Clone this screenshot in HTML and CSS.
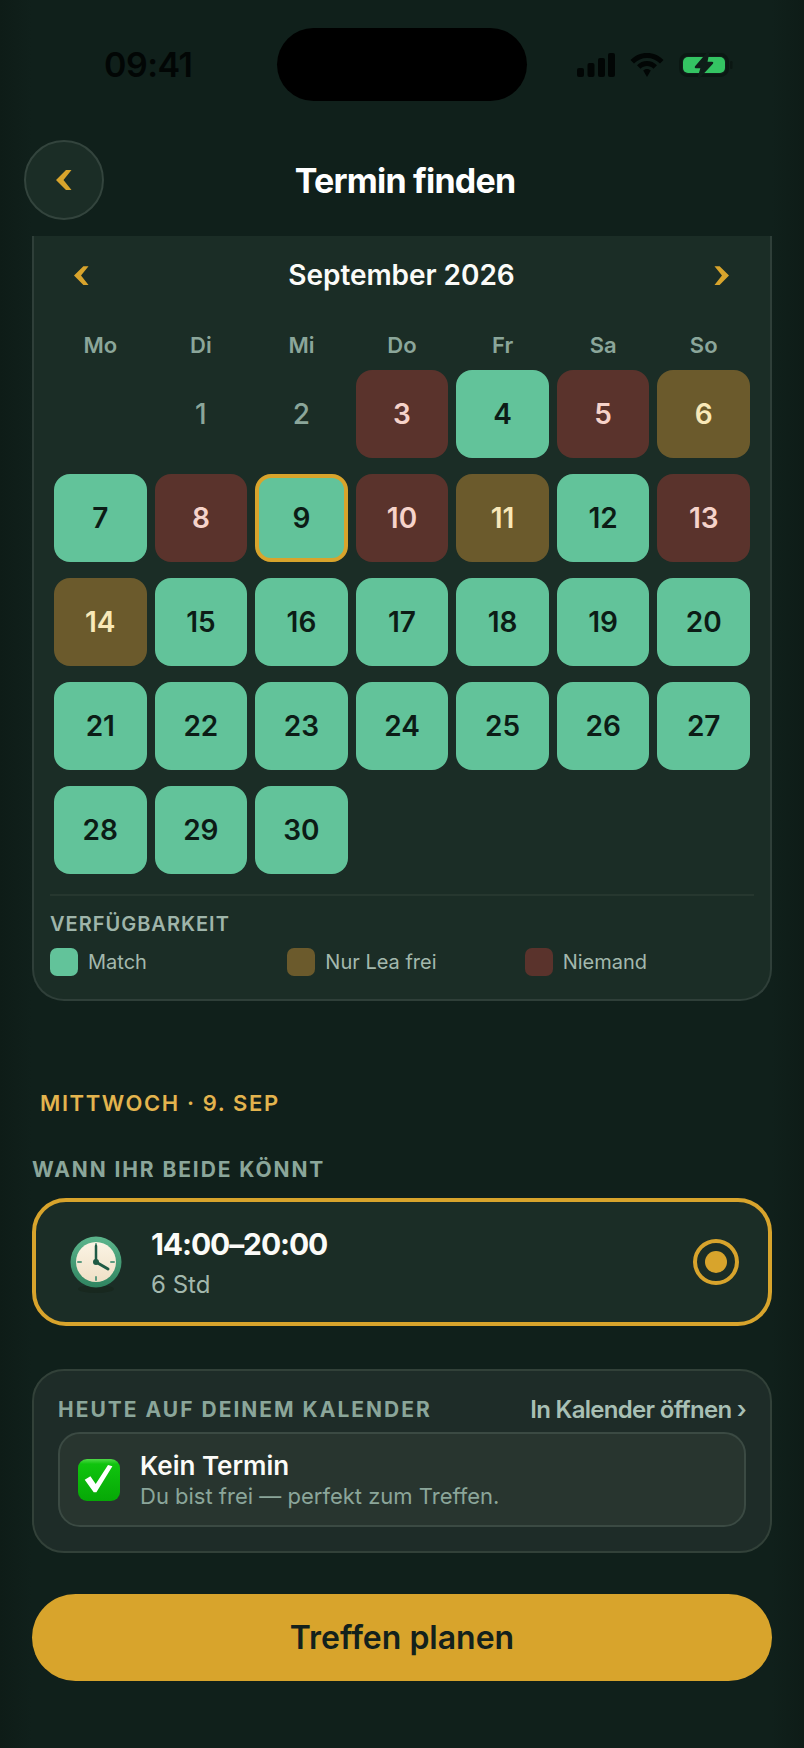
FILE: index.html
```html
<!DOCTYPE html>
<html lang="de">
<head>
    <meta charset="UTF-8">
    <meta name="viewport" content="width=device-width, initial-scale=1.0">
    <title>Termin finden</title>
    <link rel="stylesheet" href="styles.css">
</head>
<body>
    <div class="screen">
        <div class="status-bar">
            <span class="time">09:41</span>
            <div class="island"></div>
            <div class="status-icons">
                <svg width="38" height="24" viewBox="0 0 38 24">
                    <rect x="0" y="15" width="7" height="9" rx="2"/>
                    <rect x="10.500" y="10" width="7" height="14" rx="2"/>
                    <rect x="21" y="5" width="7" height="19" rx="2"/>
                    <rect x="31" y="0" width="7" height="24" rx="2"/>
                </svg>
                <svg width="34" height="24" viewBox="0 0 34 24">
                    <path d="M17 0C10.500 0 5 2.600 0.500 7L4 10.500C7.500 7 12 5 17 5C22 5 26.500 7 30 10.500L33.500 7C29 2.600 23.500 0 17 0Z"/>
                    <path d="M17 8C13 8 9.800 9.500 7 12.200L10.500 15.700C12.300 14 14.500 13 17 13C19.500 13 21.700 14 23.500 15.700L27 12.200C24.200 9.500 21 8 17 8Z"/>
                    <path d="M17 16C15.500 16 14.200 16.600 13.200 17.500L17 24L20.800 17.500C19.800 16.600 18.500 16 17 16Z"/>
                </svg>
                <svg class="battery" width="54" height="28" viewBox="0 0 54 28">
                    <rect x="1.500" y="3.500" width="47" height="21" rx="7" fill="none" stroke="#0b1713" stroke-width="3"/>
                    <rect x="4" y="6" width="42" height="16" rx="5" fill="#34c463"/>
                    <path d="M29 2L17 16H23L20 26L33 12H27Z" fill="#0f1e19" stroke="#0f1e19" stroke-width="2.500" stroke-linejoin="round"/>
                    <rect x="51" y="10" width="2.500" height="8" rx="1.200" fill="#0b1713"/>
                </svg>
            </div>
        </div>

        <header class="top-bar">
            <button class="back-btn">
                <svg width="16" height="20" viewBox="0 0 16 20"><polygon points="0,10 10,0 15.500,0 7.500,10 15.500,20 10,20"/></svg>
            </button>
            <h1 class="page-title">Termin finden</h1>
        </header>

        <section class="calendar-card">
            <div class="month-row">
                <svg class="month-arrow" width="15" height="19" viewBox="0 0 16 20"><polygon points="0,10 10,0 15.500,0 7.500,10 15.500,20 10,20"/></svg>
                <span class="month-name">September 2026</span>
                <svg class="month-arrow" width="15" height="19" viewBox="0 0 16 20"><polygon points="16,10 6,0 0.500,0 8.500,10 0.500,20 6,20"/></svg>
            </div>
            <div class="weekdays">
                <span>Mo</span><span>Di</span><span>Mi</span><span>Do</span><span>Fr</span><span>Sa</span><span>So</span>
            </div>
            <div class="days">
                <div class="day"></div>
                <div class="day past">1</div>
                <div class="day past">2</div>
                <div class="day none">3</div>
                <div class="day match">4</div>
                <div class="day none">5</div>
                <div class="day lea">6</div>
                <div class="day match">7</div>
                <div class="day none">8</div>
                <div class="day match selected">9</div>
                <div class="day none">10</div>
                <div class="day lea">11</div>
                <div class="day match">12</div>
                <div class="day none">13</div>
                <div class="day lea">14</div>
                <div class="day match">15</div>
                <div class="day match">16</div>
                <div class="day match">17</div>
                <div class="day match">18</div>
                <div class="day match">19</div>
                <div class="day match">20</div>
                <div class="day match">21</div>
                <div class="day match">22</div>
                <div class="day match">23</div>
                <div class="day match">24</div>
                <div class="day match">25</div>
                <div class="day match">26</div>
                <div class="day match">27</div>
                <div class="day match">28</div>
                <div class="day match">29</div>
                <div class="day match">30</div>
            </div>
            <div class="legend">
                <div class="legend-title">VERFÜGBARKEIT</div>
                <div class="legend-items">
                    <div class="legend-item"><span class="swatch match"></span>Match</div>
                    <div class="legend-item"><span class="swatch lea"></span>Nur Lea frei</div>
                    <div class="legend-item"><span class="swatch none"></span>Niemand</div>
                </div>
            </div>
        </section>

        <h2 class="day-heading">MITTWOCH · 9. SEP</h2>
        <h3 class="slot-heading">WANN IHR BEIDE KÖNNT</h3>

        <div class="slot-card">
            <svg class="clock" width="52" height="58" viewBox="0 0 52 58">
                <defs>
                    <linearGradient id="clockRim" x1="0" y1="0" x2="0" y2="1">
                        <stop offset="0" stop-color="#5cb58c"/>
                        <stop offset="1" stop-color="#2f8460"/>
                    </linearGradient>
                    <linearGradient id="clockFace" x1="0" y1="0" x2="0" y2="1">
                        <stop offset="0" stop-color="#fbf4e4"/>
                        <stop offset="1" stop-color="#efe0c6"/>
                    </linearGradient>
                </defs>
                <ellipse cx="26" cy="53" rx="18" ry="4" fill="#18281f"/>
                <circle cx="26" cy="26" r="25.500" fill="url(#clockRim)"/>
                <circle cx="26" cy="26" r="20" fill="url(#clockFace)"/>
                <g stroke="#5d9b80" stroke-width="2" stroke-linecap="round">
                    <line x1="26" y1="8" x2="26" y2="11"/>
                    <line x1="26" y1="41" x2="26" y2="44"/>
                    <line x1="8" y1="26" x2="11" y2="26"/>
                    <line x1="41" y1="26" x2="44" y2="26"/>
                </g>
                <g stroke="#1f5a44" stroke-linecap="round">
                    <line x1="26" y1="26" x2="26" y2="10" stroke-width="2.500"/>
                    <line x1="26" y1="26" x2="38" y2="33" stroke-width="3"/>
                </g>
                <circle cx="26" cy="26" r="3" fill="#1f5a44"/>
            </svg>
            <div class="slot-text">
                <div class="slot-time">14:00–20:00</div>
                <div class="slot-length">6 Std</div>
            </div>
            <div class="radio"><span class="radio-dot"></span></div>
        </div>

        <section class="agenda-card">
            <div class="agenda-head">
                <span class="agenda-title">HEUTE AUF DEINEM KALENDER</span>
                <span class="agenda-link">In Kalender öffnen ›</span>
            </div>
            <div class="agenda-item">
                <svg class="check" width="42" height="42" viewBox="0 0 42 42">
                    <defs>
                        <linearGradient id="checkBox" x1="0" y1="0" x2="0" y2="1">
                            <stop offset="0" stop-color="#4fd848"/>
                            <stop offset="0.120" stop-color="#10c40e"/>
                            <stop offset="1" stop-color="#06a806"/>
                        </linearGradient>
                    </defs>
                    <rect x="0" y="0" width="42" height="42" rx="9" fill="url(#checkBox)"/>
                    <path d="M6.700 20.700L12.400 17.300L17.700 25L30 6L34.400 7.300L18.400 33.300H15.700Z" fill="#fff"/>
                </svg>
                <div class="agenda-text">
                    <div class="agenda-name">Kein Termin</div>
                    <div class="agenda-sub">Du bist frei — perfekt zum Treffen.</div>
                </div>
            </div>
        </section>

        <button class="plan-btn">Treffen planen</button>
    </div>
</body>
</html>
```

FILE: styles.css
```css
* {
    box-sizing: border-box;
}
body {
    margin: 0;
    background-color: #10201b;
    font-family: Inter, "Noto Sans", sans-serif;
    color: white;
}
.screen {
    width: 804px;
    height: 1748px;
    overflow: hidden;
    background: linear-gradient(90deg, #0e1c17 0, #10201b 4%, #10201b 96%, #0e1c17 100%);
}

/* status bar */
.status-bar {
    height: 140px;
    padding-top: 28px;
    display: grid;
    grid-template-columns: 277px 250px 1fr;
    align-items: start;
}
.time {
    padding-left: 104px;
    height: 73px;
    line-height: 73px;
    font-size: 34px;
    font-weight: 600;
    letter-spacing: -0.5px;
    color: #020605;
}
.island {
    height: 73px;
    background: #000;
    border-radius: 37px;
}
.status-icons {
    height: 73px;
    padding-left: 50px;
    display: flex;
    align-items: center;
    gap: 15px;
}
.status-icons svg {
    fill: #020605;
}

/* header */
.top-bar {
    height: 80px;
    padding: 0 24px;
    display: grid;
    grid-template-columns: 80px 1fr 74px;
    align-items: center;
}
.back-btn {
    width: 80px;
    height: 80px;
    padding: 0;
    border: 2px solid #33443d;
    border-radius: 50%;
    background: #1b2d26;
    display: flex;
    align-items: center;
    justify-content: center;
}
.back-btn svg, .month-arrow {
    fill: #d8a42c;
}
.page-title {
    grid-column: 2;
    margin: 2px 0 0;
    text-align: center;
    font-size: 34px;
    line-height: 44px;
    font-weight: 700;
    letter-spacing: -0.8px;
}

/* calendar */
.calendar-card {
    margin: 16px 32px 0;
    padding: 19px 16px 0;
    height: 765px;
    background: #1b2d26;
    border: 2px solid #2f3f39;
    border-top: none;
    border-radius: 0 0 32px 32px;
}
.month-row {
    height: 40px;
    padding: 0 25px 0 24px;
    display: flex;
    align-items: center;
    justify-content: space-between;
}
.month-name {
    font-size: 28px;
    font-weight: 600;
    letter-spacing: -0.05px;
    color: #fbfbf8;
}
.weekdays {
    margin: 37px 4px 0;
    height: 26px;
    display: grid;
    grid-template-columns: repeat(7, 1fr);
    column-gap: 8px;
    text-align: center;
    font-size: 22px;
    line-height: 26px;
    font-weight: 600;
    color: #8ba69a;
}
.days {
    margin: 12px 4px 0;
    display: grid;
    grid-template-columns: repeat(7, 1fr);
    grid-auto-rows: 88px;
    gap: 16px 8px;
}
.day {
    border-radius: 16px;
    display: flex;
    align-items: center;
    justify-content: center;
    font-size: 28px;
    font-weight: 600;
}
.day.past {
    color: #8ba69a;
    font-weight: 500;
}
.match {
    background: #62c39a;
    color: #0c1c16;
}
.none {
    background: #5a332c;
    color: #f6d3ca;
}
.lea {
    background: #6b5a2c;
    color: #f8e8b8;
}
.day.selected {
    border: 4px solid #d8a42c;
}
.legend {
    margin-top: 20px;
    padding-top: 16px;
    border-top: 2px solid #26372f;
}
.legend-title {
    font-size: 20px;
    line-height: 24px;
    font-weight: 600;
    letter-spacing: 1px;
    color: #9fb5aa;
}
.legend-items {
    margin-top: 12px;
    display: grid;
    grid-template-columns: repeat(3, 1fr);
    gap: 8px;
}
.legend-item {
    display: flex;
    align-items: center;
    gap: 10px;
    font-size: 20px;
    line-height: 28px;
    color: #a3b8ad;
}
.swatch {
    width: 28px;
    height: 28px;
    border-radius: 7px;
}

/* selected day */
.day-heading {
    margin: 88px 0 0 40px;
    font-size: 22px;
    line-height: 28px;
    font-weight: 600;
    letter-spacing: 1.600px;
    color: #e3b44e;
}
.slot-heading {
    margin: 40px 0 0 32px;
    font-size: 21px;
    line-height: 26px;
    font-weight: 700;
    letter-spacing: 1.900px;
    color: #8ba69a;
}
.slot-card {
    margin: 15px 32px 0;
    height: 128px;
    padding: 0 29px 0 34px;
    background: #1b2d26;
    border: 4px solid #d8a42c;
    border-radius: 34px;
    display: flex;
    align-items: center;
}
.clock {
    margin-top: 5px;
    flex: none;
}
.slot-text {
    margin-left: 29px;
    flex: 1;
}
.slot-time {
    margin-top: -1px;
    font-size: 30px;
    line-height: 40px;
    font-weight: 700;
    letter-spacing: -1.100px;
    color: #fbfbf8;
}
.slot-length {
    margin-top: 6px;
    font-size: 24px;
    line-height: 30px;
    color: #a3b8ad;
}
.radio {
    width: 46px;
    height: 46px;
    border: 4px solid #d8a42c;
    border-radius: 50%;
    display: flex;
    align-items: center;
    justify-content: center;
}
.radio-dot {
    width: 22px;
    height: 22px;
    border-radius: 50%;
    background: #d8a42c;
}

/* agenda */
.agenda-card {
    margin: 43px 32px 0;
    height: 184px;
    padding: 25px 24px 0;
    background: #1e2c28;
    border: 2px solid #324139;
    border-radius: 32px;
}
.agenda-head {
    height: 26px;
    display: flex;
    align-items: center;
    justify-content: space-between;
}
.agenda-title {
    font-size: 21px;
    font-weight: 700;
    letter-spacing: 2px;
    color: #8ba69a;
}
.agenda-link {
    font-size: 24px;
    font-weight: 600;
    letter-spacing: -0.7px;
    color: #a8bfb4;
}
.agenda-item {
    margin-top: 10px;
    height: 95px;
    padding: 0 18px;
    background: #28352f;
    border: 2px solid #3b4a43;
    border-radius: 22px;
    display: flex;
    align-items: center;
    gap: 20px;
}
.check {
    flex: none;
}
.agenda-name {
    font-size: 26px;
    line-height: 32px;
    font-weight: 600;
    color: #fbfbf8;
}
.agenda-sub {
    font-size: 22px;
    line-height: 28px;
    color: #8ba69a;
}

/* action */
.plan-btn {
    display: block;
    margin: 41px 32px 0;
    width: 740px;
    height: 87px;
    border: none;
    border-radius: 44px;
    background: #d8a42c;
    font-family: Inter, "Noto Sans", sans-serif;
    font-size: 32px;
    font-weight: 600;
    color: #13211c;
}
```
